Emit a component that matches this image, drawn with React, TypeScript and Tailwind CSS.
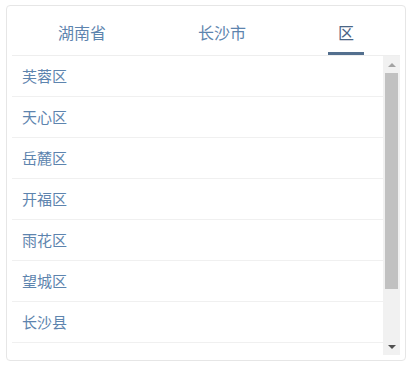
import React from "react";

const tabs = ["湖南省", "长沙市", "区"];
const items = ["芙蓉区", "天心区", "岳麓区", "开福区", "雨花区", "望城区", "长沙县"];

export default function App() {
  return (
    <div
      className="w-[415px] h-[367px] bg-white pt-[5px] pl-[6px]"
      style={{ fontFamily: '"Noto Sans CJK SC", "Noto Sans", sans-serif' }}
    >
      <div className="w-[400px] h-[356px] border border-[#e6e6e6] rounded-[4px] px-[5px] pb-[5px] flex flex-col">
        <div className="h-[50px] flex border-b border-[#eeeeee] shrink-0">
          {tabs.map((t, i) => (
            <div
              key={t}
              className={
                i === 2
                  ? "mx-[36px] px-[10px] h-full flex items-center pt-[6px] border-b-[3px] border-[#536f8e] text-[16px] text-[#4a6585]"
                  : "mx-[36px] px-[10px] h-full flex items-center pt-[6px] border-b-[3px] border-transparent text-[16px] text-[#5d84ae]"
              }
            >
              {t}
            </div>
          ))}
        </div>
        <div className="flex flex-1 min-h-0">
          <div className="flex-1 overflow-hidden">
            {items.map((it) => (
              <div
                key={it}
                className="h-[41px] border-b border-[#f0f0f0] flex items-center pl-[10px] text-[15px] text-[#5d84ae]"
              >
                {it}
              </div>
            ))}
            <div className="h-[41px]" />
          </div>
          <div className="w-[17px] bg-[#f1f1f1] flex flex-col items-center shrink-0">
            <div className="h-[17px] w-full flex items-center justify-center">
              <div className="w-0 h-0 border-l-[4px] border-r-[4px] border-b-[4px] border-l-transparent border-r-transparent border-b-[#a3a3a3]" />
            </div>
            <div className="w-[13px] h-[216px] bg-[#c1c1c1]" />
            <div className="flex-1" />
            <div className="h-[17px] w-full flex items-center justify-center">
              <div className="w-0 h-0 border-l-[4px] border-r-[4px] border-t-[4px] border-l-transparent border-r-transparent border-t-[#505050]" />
            </div>
          </div>
        </div>
      </div>
    </div>
  );
}
